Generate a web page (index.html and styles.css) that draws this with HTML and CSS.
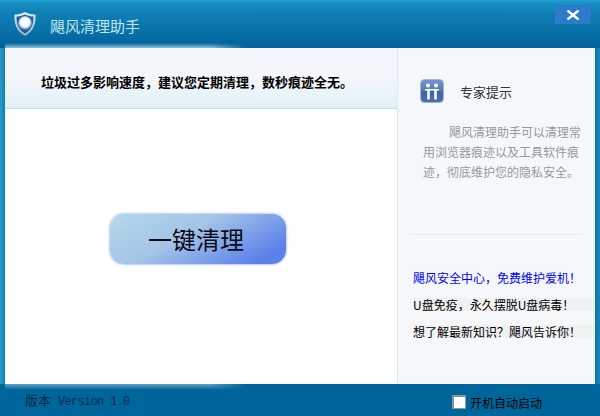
FILE: index.html
```html
<!DOCTYPE html>
<html lang="zh-CN">
<head>
    <meta charset="UTF-8">
    <title>飓风清理助手</title>
    <link rel="stylesheet" href="styles.css">
</head>
<body>
    <div class="window">
        <div class="titlebar">
            <svg class="shield" width="24" height="26" viewBox="0 0 24 26">
                <defs>
                    <radialGradient id="shieldCore" cx="50%" cy="45%" r="55%">
                        <stop offset="0" stop-color="#ffffff"/>
                        <stop offset="0.6" stop-color="#f4fafd"/>
                        <stop offset="1" stop-color="#2f6ea8"/>
                    </radialGradient>
                    <linearGradient id="shieldEdge" x1="0" y1="0" x2="0" y2="1">
                        <stop offset="0" stop-color="#e6eef2"/>
                        <stop offset="1" stop-color="#8fb0c4"/>
                    </linearGradient>
                </defs>
                <path d="M12 1 C8 3 5 3.6 1.5 3.6 C1 13 3.5 20.5 12 25 C20.5 20.5 23 13 22.5 3.6 C19 3.6 16 3 12 1 Z" fill="url(#shieldEdge)"/>
                <path d="M12 3.5 C8.5 5 6 5.6 3.6 5.6 C3.4 13 5.6 19 12 22.6 C18.4 19 20.6 13 20.4 5.6 C18 5.6 15.5 5 12 3.5 Z" fill="#1d5c94"/>
                <circle cx="12" cy="12" r="7" fill="url(#shieldCore)"/>
            </svg>
            <span class="app-title">飓风清理助手</span>
            <div class="close-btn">
                <svg width="14" height="10" viewBox="0 0 14 10">
                    <path d="M1.5 0.5 L12.5 9.5 M12.5 0.5 L1.5 9.5" stroke="#ffffff" stroke-width="2.4" fill="none"/>
                </svg>
            </div>
        </div>

        <div class="main">
            <div class="left-panel">
                <div class="notice">垃圾过多影响速度，建议您定期清理，数秒痕迹全无。</div>
                <div class="clean-area">
                    <button class="clean-btn">一键清理</button>
                </div>
            </div>
            <div class="right-panel">
                <div class="tip-head">
                    <svg class="info-icon" width="24" height="24" viewBox="0 0 24 24">
                        <defs>
                            <linearGradient id="infoBg" x1="0" y1="0" x2="0" y2="1">
                                <stop offset="0" stop-color="#7596cb"/>
                                <stop offset="0.5" stop-color="#5479b6"/>
                                <stop offset="0.5" stop-color="#3f64a6"/>
                                <stop offset="1" stop-color="#4a6eac"/>
                            </linearGradient>
                        </defs>
                        <rect x="0.5" y="0.5" width="23" height="23" rx="4" fill="url(#infoBg)" stroke="#a7b6ca"/>
                        <circle cx="8" cy="6.5" r="2" fill="#ffffff"/>
                        <circle cx="16" cy="6.5" r="2" fill="#ffffff"/>
                        <path d="M5 10 H19 V11.6 H16.8 V20.5 H14.2 V11.6 H9.8 V20.5 H7.2 V11.6 H5 Z" fill="#ffffff"/>
                    </svg>
                    <span class="tip-title">专家提示</span>
                </div>
                <p class="tip-text">飓风清理助手可以清理常用浏览器痕迹以及工具软件痕迹，彻底维护您的隐私安全。</p>
                <hr class="divider">
                <ul class="links">
                    <li class="link-blue">飓风安全中心，免费维护爱机！</li>
                    <li class="link-row">U盘免疫，永久摆脱U盘病毒！</li>
                    <li class="link-row">想了解最新知识？飓风告诉你！</li>
                </ul>
            </div>
        </div>

        <div class="footer">
            <span class="version">版本<span class="version-num">Version 1.0</span></span>
            <label class="autostart"><input type="checkbox" class="autostart-box">开机自动启动</label>
        </div>
    </div>
</body>
</html>
```

FILE: styles.css
```css
body {
    margin: 0;
    font-family: "Noto Sans CJK SC", "Liberation Sans", sans-serif;
    font-size: 12px;
}

.window {
    width: 600px;
    height: 416px;
    display: flex;
    flex-direction: column;
    overflow: hidden;
    background: linear-gradient(to right, #2a9ccb 0, #1080b4 5px, #00659b 5px, #00659b 595px, #0d74aa 595px, #1a86b8 600px);
}

/* Title bar */
.titlebar {
    position: relative;
    height: 48px;
    flex: none;
    display: flex;
    align-items: center;
    padding: 0 9px 0 13px;
    background: linear-gradient(to bottom, #22a3d3 0, #1a94c8 2px, #0f7fb6 12px, #0b75ab 28px, #00609a 48px);
}

/* soft light that falls on the top edge of the panel */
.titlebar::after {
    content: "";
    position: absolute;
    left: 5px;
    bottom: 0;
    width: 242px;
    height: 5px;
    background: linear-gradient(to bottom, rgba(190, 230, 245, 0), rgba(190, 230, 245, 0.75));
    -webkit-mask-image: linear-gradient(to right, #000 85%, transparent);
    mask-image: linear-gradient(to right, #000 85%, transparent);
}

.shield {
    flex: none;
}

.app-title {
    margin: 3px 0 0 13px;
    font-size: 15px;
    color: #bfe6f2;
}

.close-btn {
    position: absolute;
    top: 5px;
    right: 9px;
    width: 36px;
    height: 19px;
    display: flex;
    align-items: center;
    justify-content: center;
    background-color: #2a7cc8;
}

/* Main area */
.main {
    flex: 1;
    display: flex;
    margin: 0 5px;
    min-height: 0;
}

.left-panel {
    width: 392px;
    display: flex;
    flex-direction: column;
    background-color: #fff;
}

.notice {
    height: 60px;
    padding-left: 36px;
    line-height: 68px;
    font-size: 13px;
    font-weight: bold;
    color: #000;
    white-space: nowrap;
    background: linear-gradient(to bottom, #f6f7fc 0, #f3f6fb 50%, #e2f1f9 100%);
    border-bottom: 1px solid #bfdff0;
}

.clean-area {
    flex: 1;
    display: flex;
    justify-content: center;
    align-items: center;
}

.clean-btn {
    width: 176px;
    height: 50px;
    margin: 0 6px 16px 0;
    padding: 0 4px 0 0;
    border: none;
    border-radius: 14px;
    font-family: inherit;
    font-size: 24px;
    color: #0a0a14;
    background: linear-gradient(150deg, #b4d9ea 0, #a4c4e8 42%, #5a80ea 88%);
    box-shadow: 0 0 2px 1px rgba(140, 170, 230, 0.6);
}

.right-panel {
    flex: 1;
    padding: 0 0 0 12px;
    background-color: #f4f8fa;
    border-left: 1px solid #d9e8f2;
}

.tip-head {
    display: flex;
    align-items: center;
    margin: 31px 0 0 10px;
}

.tip-title {
    margin-left: 16px;
    font-size: 13px;
    color: #333;
}

.tip-text {
    width: 158px;
    margin: 19px 0 0 13px;
    text-indent: 26px;
    font-size: 12px;
    line-height: 20px;
    color: #999;
}

.divider {
    height: 1px;
    width: 173px;
    margin: 52px 0 0 0;
    border: none;
    background-color: #e3e9ec;
}

.links {
    list-style: none;
    margin: 36px 0 0 3px;
    padding: 0;
    color: #000;
}

.links li {
    height: 13px;
    line-height: 13px;
    margin-bottom: 14px;
    white-space: nowrap;
}

.link-blue {
    color: #0000ff;
}

.link-row {
    background-color: #f0f1f1;
}

/* Footer */
.footer {
    position: relative;
    height: 32px;
    flex: none;
    display: flex;
    align-items: center;
    justify-content: space-between;
    padding: 0 58px 0 25px;
    background-color: #00659b;
}

.footer::before {
    content: "";
    position: absolute;
    left: 5px;
    top: 0;
    width: 242px;
    height: 6px;
    background: linear-gradient(to bottom, rgba(150, 205, 230, 0.6), rgba(150, 205, 230, 0));
    -webkit-mask-image: linear-gradient(to right, #000 85%, transparent);
    mask-image: linear-gradient(to right, #000 85%, transparent);
}

.version {
    font-size: 13px;
    color: #0a2c48;
    margin-bottom: 1px;
}

.version-num {
    margin-left: 7px;
    font-family: "Liberation Mono", monospace;
    font-size: 12px;
    letter-spacing: -0.7px;
}

.autostart {
    display: flex;
    align-items: center;
    font-size: 12px;
    color: #000;
    padding-top: 4px;
}

.autostart-box {
    appearance: none;
    width: 14px;
    height: 14px;
    margin: 0 4px 0 0;
    background-color: #fff;
    border: 1px solid #8a9aa5;
    box-shadow: inset 1px 1px 0 #7f8b92;
}
```
